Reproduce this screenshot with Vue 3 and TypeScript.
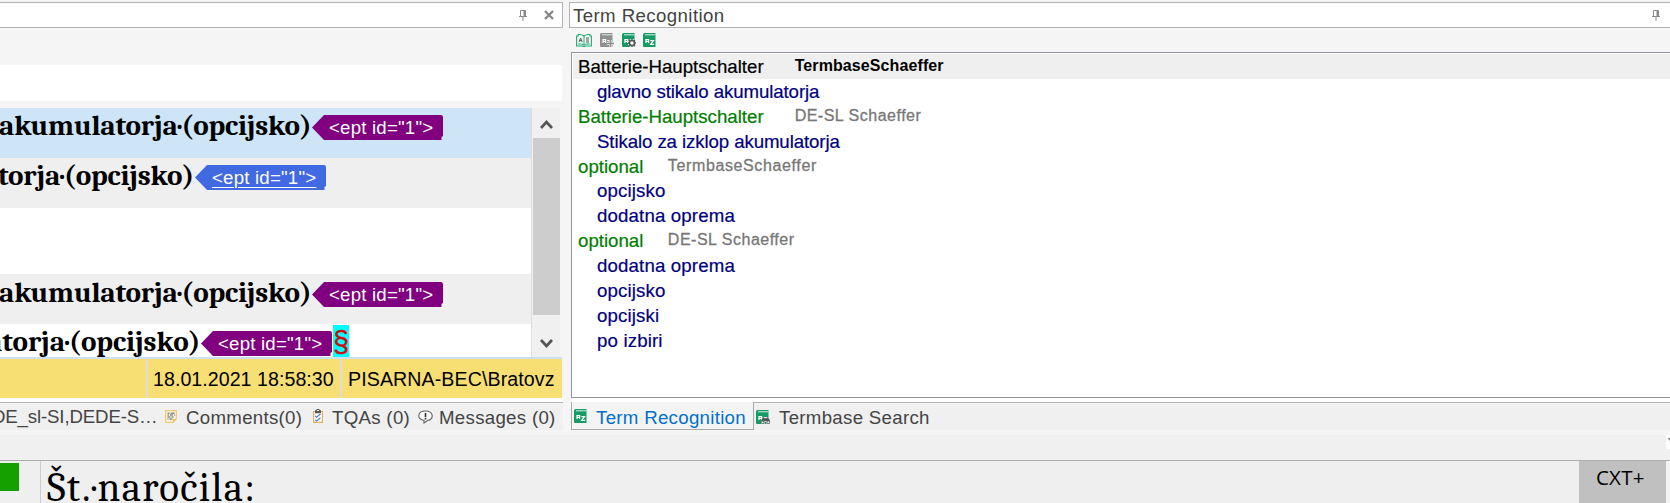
<script setup lang="ts">
interface Segment {
  text: string
  kind: string
  tag: string
  mark?: boolean
}
interface Entry {
  text: string
  base?: string
  selected?: boolean
}

const segments: Segment[] = [
  { text: 'akumulatorja·(opcijsko)', kind: 'current', tag: 'purple' },
  { text: 'torja·(opcijsko)', kind: 'shaded second', tag: 'blue' },
  { text: '', kind: 'blank', tag: '' },
  { text: 'akumulatorja·(opcijsko)', kind: 'shaded fourth', tag: 'purple' },
  { text: 'atorja·(opcijsko)', kind: 'last', tag: 'purple', mark: true },
]

const entries: Entry[] = [
  { text: 'Batterie-Hauptschalter', base: 'TermbaseSchaeffer', selected: true },
  { text: 'glavno stikalo akumulatorja' },
  { text: 'Batterie-Hauptschalter', base: 'DE-SL Schaeffer' },
  { text: 'Stikalo za izklop akumulatorja' },
  { text: 'optional', base: 'TermbaseSchaeffer' },
  { text: 'opcijsko' },
  { text: 'dodatna oprema' },
  { text: 'optional', base: 'DE-SL Schaeffer' },
  { text: 'dodatna oprema' },
  { text: 'opcijsko' },
  { text: 'opcijski' },
  { text: 'po izbiri' },
]
</script>

<template>
  <div class="window">
    <svg class="defs" width="0" height="0">
      <symbol id="pin" viewBox="0 0 8 11">
        <path d="M1.5 6.5V.5h5v6M0 6.5h8M4 7v4" fill="none" stroke="#8b8b8b" />
        <path d="M4.5 1h1.6v5H4.5z" fill="#8b8b8b" />
      </symbol>
      <symbol id="book" viewBox="0 0 13 14">
        <path d="M1.5 0H12.500v14H1Q0 14 0 12.500V1.500Q0 0 1.500 0z" fill="currentColor" />
        <path d="M2 1.300h10.500v1H2z" fill="#d9efe5" />
        <path d="M3 10V6.500h2.600V10M3 8.300h2.600M7.300 7.700h3.200L7.700 11.300h3.400" fill="none" stroke="#fff" stroke-width="1.200" />
      </symbol>
    </svg>

    <div class="docks">
      <section class="left">
        <header class="title">
          <svg class="pin" width="8" height="11"><use href="#pin" /></svg>
          <svg class="close" width="10" height="10" viewBox="0 0 10 10"><path d="M1 1l8 8M9 1L1 9" stroke="#858585" stroke-width="2.3" /></svg>
        </header>
        <div class="strip"></div>
        <div class="results">
          <div class="segments">
            <div v-for="(s, i) in segments" :key="i" class="segment" :class="s.kind">
              <template v-if="s.text">
                <span class="words">{{ s.text }}</span>
                <span class="tag" :class="s.tag">
                  <svg class="shape" width="131" height="25" viewBox="0 0 131 25"><path d="M0 12.500L12 0H129Q131 0 131 3V21L129.500 22V25H12z" /></svg>
                  <span class="label">&lt;ept id="1"&gt;</span>
                </span>
                <span v-if="s.mark" class="mark">§</span>
              </template>
            </div>
          </div>
          <div class="scroll">
            <div class="arrow"><svg width="13" height="10" viewBox="0 0 13 10"><path d="M1 8l5.500-6L12 8" fill="none" stroke="#555" stroke-width="2.700" /></svg></div>
            <div class="thumb"></div>
            <div class="arrow down"><svg width="13" height="10" viewBox="0 0 13 10"><path d="M1 2l5.500 6L12 2" fill="none" stroke="#555" stroke-width="2.700" /></svg></div>
          </div>
        </div>
        <div class="info">
          <div class="c1"></div>
          <div class="c2">18.01.2021 18:58:30</div>
          <div class="c3">PISARNA-BEC\Bratovz</div>
        </div>
        <nav class="tabs">
          <span class="tm">DE_sl-SI,DEDE-S…</span>
          <svg class="note" width="12" height="13" viewBox="0 0 12 13"><path d="M.7.700h10.600v8L8 12.300H.700z" fill="#fff7df" stroke="#f2c873" stroke-width="1.300" /><path d="M2.500 3.200h2m1 0h4M2.500 5h1.500m1 0h3m1 0h1M2.500 7h3m1 0h2M2.500 9h1m1 0h3" stroke="#8a8d93" stroke-width="1.400" /><path d="M8 12.300V9h3.300z" fill="#efba55" /></svg>
          <span class="comments">Comments(0)</span>
          <svg class="clip" width="10" height="14" viewBox="0 0 10 14"><path d="M.6 2.500h8.800v10.900H.600z" fill="#fff" stroke="#e6ae58" stroke-width="1.200" /><path d="M2 1.200h1.500V0h3v1.200H8v3H2z" fill="#555" /><path d="M4 1h2v1H4z" fill="#fff" /><path d="M2.200 7l1.400 1.300L7.500 5M2.200 10.700l1.400 1.200 3.900-3.200" fill="none" stroke="#4a86cb" stroke-width="1.200" /></svg>
          <span class="tqas">TQAs (0)</span>
          <svg class="bubble" width="15" height="14" viewBox="0 0 15 14"><path d="M4.500 10C-1 8-.500 1 7.500 1s9 8 2 9.500L6 13V10.500z" fill="#f7f7f7" stroke="#666" stroke-width="1.100" /><path d="M7.500 3v4.200M7.500 8v1.500" stroke="#333" stroke-width="1.600" /></svg>
          <span class="messages">Messages (0)</span>
        </nav>
      </section>

      <section class="right">
        <header class="title">
          <span>Term Recognition</span>
          <svg class="pin" width="8" height="11"><use href="#pin" /></svg>
        </header>
        <div class="toolbar">
          <svg class="open" width="16" height="13" viewBox="0 0 16 13"><path d="M.600 2h1.500V.600Q6 .300 8 2q2-1.700 5.900-1.400V2h1.500v10H9.500L8 12.700 6.500 12H.600z" fill="#eefaf4" stroke="#23a878" stroke-width="1.100" /><path d="M8 2v9.500M2.200 10Q6 9.500 8 11q2-1.500 5.800-1" fill="none" stroke="#23a878" /><path d="M3 8l1.600-4L6.200 8M3.500 6.700h2M10 4h3M10 6h3M10 8h3" fill="none" stroke="#555" stroke-width="1" /></svg>
          <span class="tool gray"><svg width="13" height="14"><use href="#book" /></svg><svg class="badge" width="7" height="7" viewBox="0 0 7 7"><path d="M3.500 0v7M0 3.500h7" stroke="#f5f5f5" stroke-width="3" /><path d="M3.500 0v7M0 3.500h7" stroke="#8c8c8c" stroke-width="1.700" /></svg></span>
          <span class="tool gear"><svg width="13" height="14"><use href="#book" /></svg><svg class="badge" width="8" height="8" viewBox="0 0 8 8"><circle cx="4" cy="4" r="4" fill="#f5f5f5" /><circle cx="4" cy="4" r="2.500" fill="#fff" stroke="#555" stroke-width="1.600" /><path d="M4 0v1M4 7v1M0 4h1M7 4h1M1 1l1 1M6 6l1 1M7 1L6 2M1 7l1-1" stroke="#555" stroke-width="1.300" /></svg></span>
          <svg class="plain" width="13" height="14"><use href="#book" /></svg>
        </div>
        <div class="list">
          <div v-for="(e, i) in entries" :key="i" class="entry" :class="{ selected: e.selected, source: e.base, long: e.text.length > 25, short: e.text.length < 15 && !e.base }">
            <span class="term">{{ e.text }}</span>
            <span v-if="e.base" class="base">{{ e.base }}</span>
          </div>
        </div>
        <nav class="tabs">
          <div class="tab active"><svg width="13" height="14"><use href="#book" /></svg><span>Term Recognition</span></div>
          <div class="tab"><span class="tool"><svg width="13" height="14"><use href="#book" /></svg><svg class="badge" width="9" height="7" viewBox="0 0 9 7"><path d="M0 3L2 0h1.500v1h2V0H7l2 3v4H5.500V4.500h-2V7H0z" fill="#555" stroke="#f5f5f5" stroke-width=".5" /><path d="M1 4.500h1.500V6H1zM6.500 4.500H8V6H6.500z" fill="#fff" /></svg></span><span class="search">Termbase Search</span></div>
        </nav>
      </section>
    </div>

    <div class="divider"><i><svg width="4" height="14"><path d="M1.500 3H4v3z" fill="#888" /></svg></i></div>
    <div class="editor">
      <div class="state"><i></i></div>
      <div class="content">Št.·naročila:</div>
      <div class="context">CXT+</div>
      <div class="edge"></div>
    </div>
  </div>
</template>

<style>
body { margin: 0; overflow: hidden; }
</style>
<style scoped>
* { box-sizing: border-box; }
.window { width: 1670px; height: 503px; overflow: hidden; background: #f5f5f5; font: 18.67px/24px "Liberation Sans", Arial, sans-serif; color: #444; white-space: nowrap; }
svg { display: block; flex: none; }
.defs { position: absolute; }
.docks { display: flex; height: 435px; padding-top: 2px; }
.left { width: 563px; flex: none; margin-right: 6px; display: flex; flex-direction: column; overflow: hidden; }
.right { flex: 1; display: flex; flex-direction: column; min-width: 0; }
.title { height: 26px; flex: none; border: 1px solid #b3b3b5; background: #fff; display: flex; align-items: center; letter-spacing: .4px; }
.left .title { border-left: 0; }
.left .pin { margin-left: 519px; }
.close { margin-left: 17px; }
.right .title { border-right: 0; padding: 1px 10px 0 3px; justify-content: space-between; }
.right .pin { margin-top: -1px; }
.strip { height: 36px; flex: none; margin: 37px 1px 7px 0; background: #fff; }
.results { height: 249px; flex: none; display: flex; }
.segments { width: 531px; flex: none; overflow: hidden; }
.segment { height: 50px; display: flex; align-items: flex-start; overflow: hidden; background: #fff; }
.current { background: #cde5f7; }
.shaded { background: #efefef; }
.blank { height: 66px; }
.fourth { padding-top: 1px; }
.fourth .words { line-height: 35px; }
.last { height: 33px; padding-top: 0; }
.words { width: 313px; margin-left: -1px; flex: none; color: #000; font: bold 29.2px/36px Cambria, Caladea, "Liberation Serif", serif; letter-spacing: -.18px; }
.second .words { width: 197px; margin-left: -2px; }
.last .words { width: 214px; margin-left: -13px; letter-spacing: -.05px; }
.tag { display: grid; margin-top: 7px; }
.shape, .label { grid-area: 1 / 1; }
.purple { fill: #800080; }
.blue { fill: #4169e1; }
.label { color: #fff; padding-left: 17px; line-height: 26px; letter-spacing: .2px; fill: none; }
.blue .label { justify-self: start; padding-left: 0; margin-left: 17px; text-decoration: underline; text-decoration-thickness: 1px; text-underline-offset: 3px; }
.mark { margin-left: 1px; margin-top: 1px; width: 16px; height: 32px; background: #0ff; color: #d00d0d; font-size: 29px; line-height: 35px; text-align: center; -webkit-text-stroke: .4px; }
.scroll { width: 31px; border-left: 1px solid #ddd; padding-left: 1px; border-right: 2px solid #f5f5f5; background: #f0f0f0; display: flex; flex-direction: column; }
.arrow { height: 30px; display: flex; align-items: center; justify-content: center; padding-top: 3px; }
.thumb { height: 177px; background: #cdcdcd; }
.down { height: 42px; padding-top: 13px; }
.info { height: 41px; flex: none; margin-right: 1px; display: flex; border-top: 2px solid #cee0ef; font-size: 19.6px; line-height: 40px; color: #000; }
.info div { background: #f8df74; }
.c1 { width: 146px; }
.c2 { width: 192px; margin-left: 2px; padding-left: 5px; letter-spacing: .05px; }
.c3 { flex: 1; margin-left: 2px; padding-left: 6px; letter-spacing: .1px; }
.info .c2, .info .c3 { box-shadow: -2px 0 #ddd; }
.tabs { height: 28px; flex: none; border-top: 1px solid #b3b3b3; background: #f0f0f0; display: flex; align-items: flex-start; box-shadow: 0 -4px #fff; margin-top: 4px; letter-spacing: .3px; line-height: 29px; }
.tm { width: 173px; margin-left: -8px; line-height: 27px; letter-spacing: -.15px; }
.note { margin: 7px 0 0 0; }
.comments { width: 123px; margin-left: 9px; }
.clip { margin: 6px 0 0 4px; }
.tqas { width: 78px; margin-left: 9px; }
.bubble { margin: 7px 0 0 8px; }
.messages { margin-left: 6px; }
.toolbar { height: 24px; flex: none; display: flex; align-items: flex-start; padding: 5px 0 0 7px; color: #169b65; }
.open { margin-top: 1px; }
.tool { display: grid; width: 14px; height: 14px; }
.tool > svg { grid-area: 1 / 1; }
.tool > .badge { align-self: end; justify-self: end; }
.gray { color: #8f8f8f; margin-left: 8px; }
.gear { margin-left: 8px; }
.plain { margin-left: 7px; }
.list { height: 346px; flex: none; margin-left: 2px; border: 1px solid #91959f; border-right: 0; background: #fff; padding: 1px 0 0 1px; }
.entry { height: 24.9px; padding-left: 24px; display: flex; align-items: flex-start; color: #000080; line-height: 25.2px; -webkit-text-stroke: .2px; }
.long { letter-spacing: -.1px; }
.short { letter-spacing: .15px; }
.source { padding-left: 5px; color: #007d00; }
.selected { background: #efefef; color: #000; }
.base { margin-left: 31px; color: #777; font-size: 16px; letter-spacing: .5px; line-height: 24px; -webkit-text-stroke: .3px; }
.entry:nth-child(n + 5) .base { margin-left: 24.500px; }
.entry:nth-child(5) .base { letter-spacing: .62px; }
.selected .base { color: #000; font-weight: bold; letter-spacing: .1px; -webkit-text-stroke: 0; }
.right .tabs { margin-left: 2px; }
.tab { display: flex; color: #444; }
.tab > svg, .tab > .tool { color: #169b65; margin: 7px 0 0 2px; }
.tab > span:last-child { margin-left: 9px; }
.tab > .search { margin-left: 6px; }
.active { height: 28px; width: 183px; margin-top: -1px; padding-top: 1px; color: #0070cc; background: #f4f4f4; border: 1px solid #aaa; border-top: 0; }
.active > svg { margin-top: 6px; }
.divider { height: 25px; background: #f0f0f0; display: flex; justify-content: flex-end; }
.divider i { width: 4px; height: 14px; background: #fff; }
.editor { height: 43px; border-top: 1px solid #adadad; background: #efefef; display: flex; }
.state { width: 41px; border-right: 1px solid #ccc; padding-top: 2px; }
.state i { display: block; width: 19px; height: 28px; background: #16a000; }
.content { flex: 1; padding-left: 6px; color: #000; font: 41px/53px Cambria, Caladea, "Liberation Serif", serif; letter-spacing: 1.3px; }
.context { width: 87px; padding-left: 17px; background: #c0c0c0; color: #000; font: 20.500px/33px "Open Sans", "Noto Sans", sans-serif; letter-spacing: .2px; }
.edge { width: 4px; background: #f3f3f3; }
</style>
